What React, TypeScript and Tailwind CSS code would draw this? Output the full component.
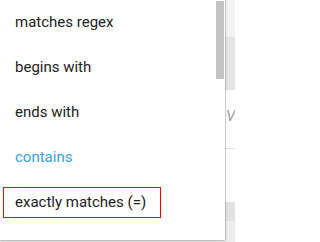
const items = [
  { label: "matches regex" },
  { label: "begins with" },
  { label: "ends with" },
  { label: "contains", active: true },
  { label: "exactly matches (=)", boxed: true },
  { label: "does not contain" },
];

export default function App() {
  return (
    <div className="relative w-[235px] h-[242px] overflow-hidden bg-white font-['Roboto',sans-serif]">
      {/* page behind the menu */}
      <div className="flex flex-col h-full w-[235px]">
        <div className="h-[37px] bg-[#f3f3f3]"></div>
        <div className="h-[53px] bg-[#e4e4e4]"></div>
        <div className="h-[59px] border-b border-[#e2e2e2] bg-white flex items-end justify-end overflow-hidden pb-[24px]">
          <span className="w-[9px] overflow-hidden whitespace-nowrap text-[15px] italic leading-none text-[#9e9e9e]">
            Value
          </span>
        </div>
        <div className="h-[53px] bg-white"></div>
        <div className="h-[19px] bg-[#e2e2e2]"></div>
        <div className="flex-1 bg-[#ededed]"></div>
      </div>

      {/* dropdown menu */}
      <div className="absolute left-0 top-0 w-[225px] h-[240px] flex bg-white shadow-[0_1px_2px_rgba(0,0,0,0.25),1px_0_1px_rgba(0,0,0,0.12)] overflow-hidden">
        <ul className="flex-1 flex flex-col">
          {items.map((it) => (
            <li
              key={it.label}
              className={
                "h-[45px] shrink-0 flex items-center px-[15px] text-[15px] " +
                (it.active ? "text-[#35a2f0]" : "text-[#222222]")
              }
            >
              {it.boxed ? (
                <span className="-ml-[12px] pl-[11px] w-[158px] h-[31px] flex items-center border border-[#ff0000]">
                  {it.label}
                </span>
              ) : (
                it.label
              )}
            </li>
          ))}
        </ul>
        <div className="w-[10px] pl-px pt-px">
          <div className="w-[8px] h-[78px] bg-[#c4c4c4]"></div>
        </div>
      </div>
    </div>
  );
}
